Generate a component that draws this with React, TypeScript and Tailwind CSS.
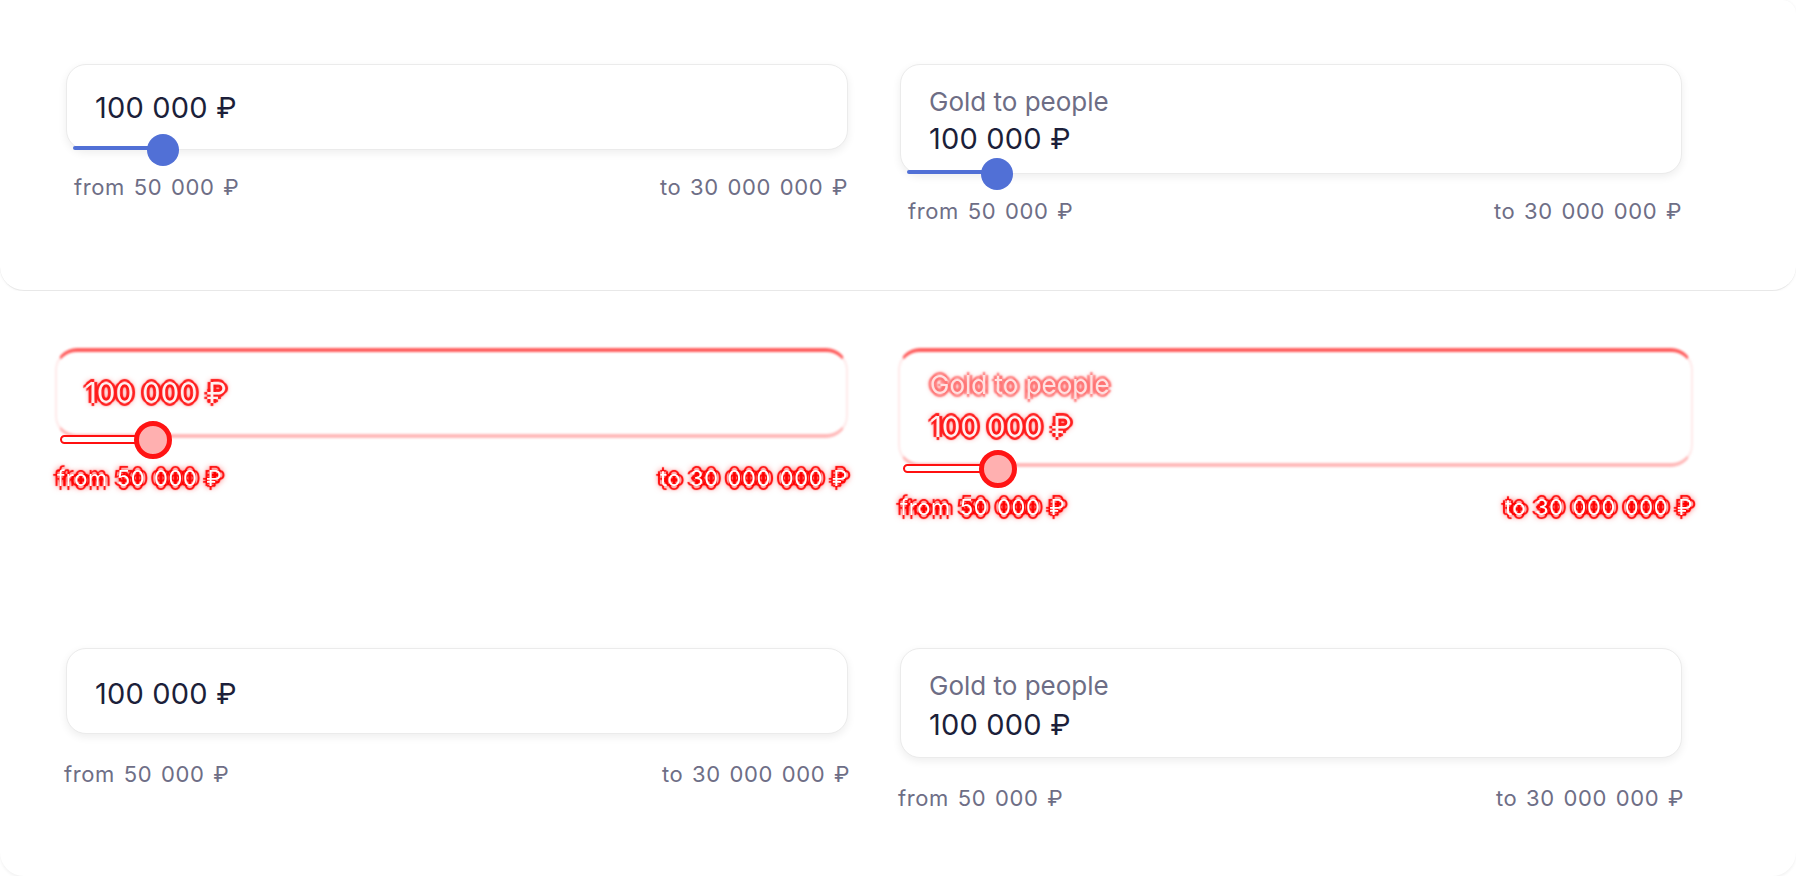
const font = "font-['Inter','Liberation_Sans',sans-serif]";

const valueGlow =
  "[text-shadow:-3px_0_1px_#ff1a1a,3px_0_1px_#ff1a1a,0_-3px_1px_#ff1a1a,0_3px_1px_#ff1a1a,0_0_6px_#ff1a1a]";
const labelGlow =
  "[text-shadow:-3px_0_2px_#ff7070,3px_0_2px_#ff7070,0_-3px_2px_#ff7070,0_3px_2px_#ff7070,0_0_6px_#ff9090]";
const smallGlow =
  "[text-shadow:-4px_0_1px_#ff0000,4px_0_1px_#ff0000,0_-4px_1px_#ff0000,0_4px_1px_#ff0000,0_0_7px_#ff0000,0_0_9px_#ff0000]";

const smallText = "text-[22px] leading-[28px] tracking-[0.6px] [word-spacing:2px]";
const valueText = "text-[29px] leading-[36px] tracking-[0.2px]";
const labelText = "text-[26px] leading-[30px]";

function Slider({ left }: { left: number }) {
  return (
    <>
      <div className="absolute left-[6px] bottom-[-1px] h-[4px] w-[86px] rounded-full bg-[#5170d6]" />
      <div
        className="absolute bottom-[-17px] h-[32px] w-[32px] rounded-full bg-[#5170d6]"
        style={{ left }}
      />
    </>
  );
}

function Field({ label, slider }: { label?: string; slider?: boolean }) {
  return (
    <div className="w-[782px]">
      <div
        className={`relative rounded-[20px] border border-[#ebebeb] bg-white shadow-[0_3px_8px_rgba(0,0,0,0.07)] ${
          label
            ? "h-[110px] pt-[22px] pl-[28px]"
            : `flex h-[86px] items-center pl-[28px] ${slider ? "pt-[2px]" : "pt-[5px]"}`
        }`}
      >
        {label && <div className={`${labelText} text-[#6d6d85]`}>{label}</div>}
        <div className={`${valueText} text-[#1c1f3a] ${label ? (slider ? "mt-[4px]" : "mt-[6px]") : ""}`}>
          100 000 ₽
        </div>
        {slider && <Slider left={80} />}
      </div>
      <div
        className={`flex justify-between text-[#6e6e86] ${smallText} ${
          slider ? "mt-[23px] pl-[8px]" : "mt-[26px] -ml-[2px] -mr-[2px]"
        }`}
      >
        <span>from 50 000 ₽</span>
        <span>to 30 000 000 ₽</span>
      </div>
    </div>
  );
}

function DiffField({ label, width }: { label?: string; width: number }) {
  return (
    <div style={{ width }}>
      <div
        className={`relative rounded-[22px] ${
          label ? "h-[119px] pt-[22px] pl-[32px]" : "flex h-[90px] items-center pl-[30px]"
        }`}
      >
        <div className="absolute inset-0 rounded-[22px] border-x-[2px] border-t-[4px] border-b-[4px] border-x-[#ffeaea] border-t-[#ff5c5c] border-b-[#ffb9b9] blur-[1px]" />
        {label && (
          <div className={`relative blur-[0.6px] ${labelText} text-[#ffe0e0] ${labelGlow}`}>{label}</div>
        )}
        <div
          className={`relative blur-[0.6px] ${valueText} text-[#fff0f0] ${valueGlow} ${label ? "mt-[9px]" : ""}`}
        >
          100 000 ₽
        </div>
        <div className="absolute left-[5px] bottom-[-6px] h-[9px] w-[90px] rounded-full border-2 border-[#ff1010] bg-white" />
        <div
          className="absolute bottom-[-21px] h-[38px] w-[38px] rounded-full border-[5px] border-[#ff1414] bg-[#ffb0b0]"
          style={{ left: label ? 81 : 79 }}
        />
      </div>
      <div className={`mt-[26px] flex justify-between pl-[2px] text-white blur-[0.4px] ${smallText}`}>
        <span className={smallGlow}>from 50 000 ₽</span>
        <span className={smallGlow}>to 30 000 000 ₽</span>
      </div>
    </div>
  );
}

export default function App() {
  return (
    <div className={`h-[876px] w-[1796px] overflow-hidden bg-white ${font}`}>
      {/* first shot */}
      <div className="h-[291px] rounded-b-[24px] rounded-tr-[14px] border-b border-[#e8e8e8] bg-white shadow-[0_0_3px_rgba(0,0,0,0.06)]">
        <div className="flex gap-[52px] pl-[66px] pt-[64px]">
          <Field slider />
          <Field label="Gold to people" slider />
        </div>
      </div>

      {/* diff */}
      <div className="h-[293px] bg-white">
        <div className="flex gap-[50px] pl-[55px] pt-[57px]">
          <DiffField width={793} />
          <DiffField label="Gold to people" width={795} />
        </div>
      </div>

      {/* second shot */}
      <div className="h-[292px] rounded-b-[24px] bg-white shadow-[0_2px_3px_rgba(0,0,0,0.05)]">
        <div className="flex gap-[52px] pl-[66px] pt-[64px]">
          <Field />
          <Field label="Gold to people" />
        </div>
      </div>
    </div>
  );
}
